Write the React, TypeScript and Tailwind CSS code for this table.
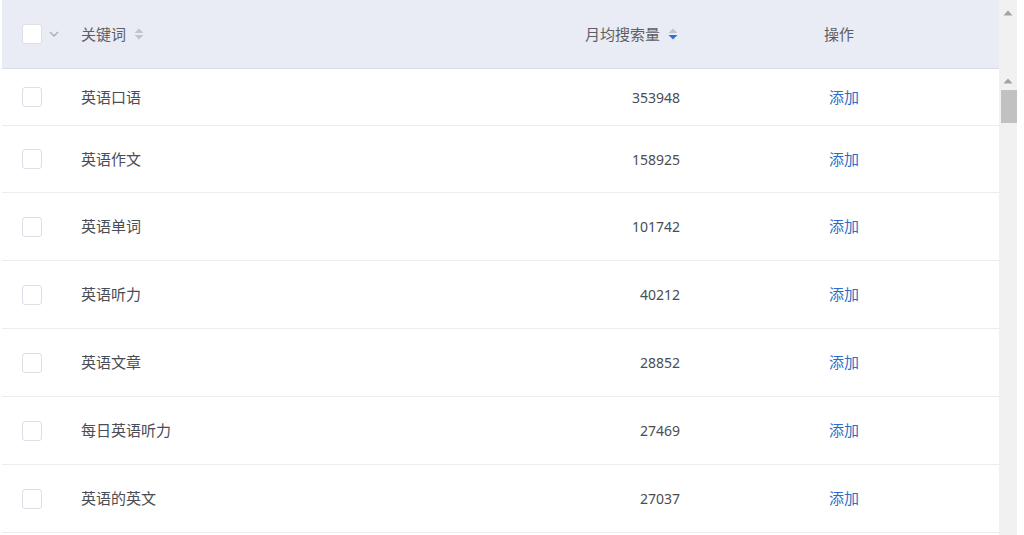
import React from "react";

type Row = { keyword: string; volume: number };

const rows: Row[] = [
  { keyword: "英语口语", volume: 353948 },
  { keyword: "英语作文", volume: 158925 },
  { keyword: "英语单词", volume: 101742 },
  { keyword: "英语听力", volume: 40212 },
  { keyword: "英语文章", volume: 28852 },
  { keyword: "每日英语听力", volume: 27469 },
  { keyword: "英语的英文", volume: 27037 },
];

const font = {
  fontFamily: '"Noto Sans", "Noto Sans CJK SC", sans-serif',
};

function Checkbox() {
  return (
    <div className="w-[20px] h-[20px] rounded-[3px] border border-[#dcdfe8] bg-white" />
  );
}

function SortIcon({ active }: { active?: boolean }) {
  return (
    <svg width="10" height="14" viewBox="0 0 10 14" className="ml-[8px]">
      <path d="M0.5 6 L5 1.5 L9.5 6 Z" fill="#c0c4cc" />
      <path d="M0.5 8 L5 12.5 L9.5 8 Z" fill={active ? "#2e6fd8" : "#c0c4cc"} />
    </svg>
  );
}

function Arrow() {
  return (
    <svg width="10" height="6" viewBox="0 0 10 6">
      <path d="M0.5 5.5 L5 0.5 L9.5 5.5 Z" fill="#a3a3a3" />
    </svg>
  );
}

export default function App() {
  return (
    <div className="flex w-[1024px] h-[535px] bg-white overflow-hidden" style={font}>
      <div className="w-[2px]" />
      <div className="w-[997px] flex flex-col">
        <div className="flex items-center h-[69px] bg-[#e9ecf4] border-b border-[#d9dde8] text-[15px] text-[#5c5f66] shrink-0">
          <div className="w-[60px] flex items-center pl-[20px]">
            <Checkbox />
            <svg width="10" height="6" viewBox="0 0 10 6" className="ml-[7px]">
              <path d="M1 1 L5 5 L9 1" stroke="#a8abb2" strokeWidth="1.3" fill="none" />
            </svg>
          </div>
          <div className="w-[400px] flex items-center pl-[19px]">
            关键词
            <SortIcon />
          </div>
          <div className="w-[238px] flex items-center justify-end pr-[22px]">
            月均搜索量
            <SortIcon active />
          </div>
          <div className="flex-1 pl-[124px]">操作</div>
        </div>
        {rows.map((row, index) => (
          <div
            key={index}
            className={
              "flex items-center border-b border-[#ebedf3] text-[15px] shrink-0 " +
              (index === 0 ? "h-[57px]" : index === 1 ? "h-[67px]" : "h-[68px]")
            }
          >
            <div className="w-[60px] pl-[20px]">
              <Checkbox />
            </div>
            <div className="w-[400px] pl-[19px] text-[#4a4d54]">{row.keyword}</div>
            <div className="w-[238px] text-right pr-[20px] text-[14px] text-[#4a4d54]">
              {row.volume}
            </div>
            <div className="flex-1 pl-[129px] text-[#2d6cc8]">添加</div>
          </div>
        ))}
      </div>
      <div className="w-[18px] h-full bg-[#f1f1f1] flex flex-col items-center">
        <div className="mt-[10px]">
          <Arrow />
        </div>
        <div className="mt-[62px]">
          <Arrow />
        </div>
        <div className="mt-[6px] w-[16px] h-[33px] bg-[#c1c1c1] ml-[2px]" />
      </div>
      <div className="flex-1" />
    </div>
  );
}
